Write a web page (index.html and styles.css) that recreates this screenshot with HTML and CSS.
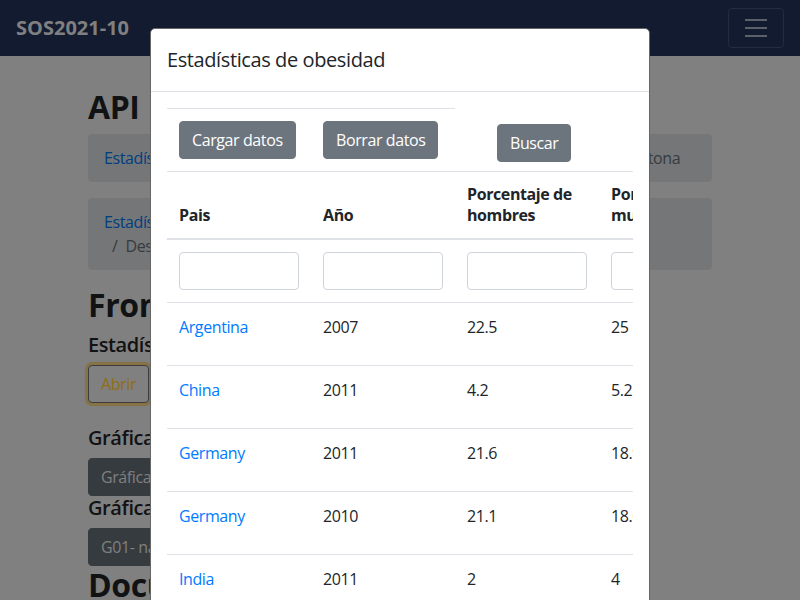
FILE: index.html
```html
<!DOCTYPE html>
<html lang="es">
<head>
<meta charset="utf-8">
<title>SOS2021-10</title>
<link rel="stylesheet" href="styles.css">
</head>
<body>
<div class="page">
  <nav class="navbar">
    <span class="brand">SOS2021-10</span>
    <button class="toggler" type="button" aria-label="Menú">
      <svg width="30" height="30" viewBox="0 0 30 30"><path d="M4 7h22M4 15h22M4 23h22" stroke="#5c606b" stroke-width="2" fill="none"/></svg>
    </button>
  </nav>

  <main class="container">
    <h1 class="h1">API</h1>
    <ol class="breadcrumb nowrap">
      <li><a href="#">Estadísticas de obesidad</a></li>
      <li class="sep">Documentación de la API realizada por Pedro Santona</li>
    </ol>
    <ol class="breadcrumb">
      <li><a href="#">Estadísticas de obesidad (API v2)</a></li>
      <li class="sep">Desarrollado por el grupo SOS2021-10 de la Universidad de Sevilla</li>
    </ol>

    <h1 class="h1">Front-end</h1>
    <h5 class="h5">Estadísticas de obesidad</h5>
    <button class="btn btn-warning-outline" type="button">Abrir</button>

    <h5 class="h5 spaced">Gráficas de obesidad</h5>
    <button class="btn btn-dim" type="button">Gráfica con Highcharts</button>
    <h5 class="h5">Gráficas de integración</h5>
    <button class="btn btn-dim" type="button">G01- natality-stats</button>
    <h1 class="h1">Documentación</h1>
  </main>
</div>

<div class="modal">
  <div class="modal-header">
    <h5 class="modal-title">Estadísticas de obesidad</h5>
  </div>
  <div class="modal-body">
    <div class="toolbar">
      <div class="actions">
        <div class="action-cell"><button class="btn btn-secondary" type="button">Cargar datos</button></div>
        <div class="action-cell"><button class="btn btn-secondary" type="button">Borrar datos</button></div>
      </div>
      <div class="search"><button class="btn btn-secondary" type="button">Buscar</button></div>
    </div>
    <div class="table-wrap">
      <table class="table">
        <thead>
          <tr>
            <th>Pais</th>
            <th>Año</th>
            <th>Porcentaje de hombres</th>
            <th>Porcentaje de mujeres</th>
            <th>Porcentaje total</th>
            <th>Acciones</th>
          </tr>
        </thead>
        <tbody>
          <tr>
            <td><input class="form-control" type="text"></td>
            <td><input class="form-control" type="text"></td>
            <td><input class="form-control" type="text"></td>
            <td><input class="form-control" type="text"></td>
            <td><input class="form-control" type="text"></td>
            <td></td>
          </tr>
          <tr>
            <td><a href="#">Argentina</a></td><td>2007</td><td>22.5</td><td>25</td><td>23.7</td>
            <td><button class="btn btn-danger" type="button">Borrar</button></td>
          </tr>
          <tr>
            <td><a href="#">China</a></td><td>2011</td><td>4.2</td><td>5.2</td><td>4.7</td>
            <td><button class="btn btn-danger" type="button">Borrar</button></td>
          </tr>
          <tr>
            <td><a href="#">Germany</a></td><td>2011</td><td>21.6</td><td>18.9</td><td>20.2</td>
            <td><button class="btn btn-danger" type="button">Borrar</button></td>
          </tr>
          <tr>
            <td><a href="#">Germany</a></td><td>2010</td><td>21.1</td><td>18.6</td><td>19.9</td>
            <td><button class="btn btn-danger" type="button">Borrar</button></td>
          </tr>
          <tr>
            <td><a href="#">India</a></td><td>2011</td><td>2</td><td>4</td><td>3</td>
            <td><button class="btn btn-danger" type="button">Borrar</button></td>
          </tr>
        </tbody>
      </table>
    </div>
  </div>
</div>
</body>
</html>
```

FILE: styles.css
```css
* { box-sizing: border-box; }

html, body { margin: 0; height: 100%; overflow: hidden; }

body {
  font-family: "Open Sans", "Noto Sans", sans-serif;
  font-size: 16px;
  line-height: 1.5;
  letter-spacing: -0.025em;
  color: #212529;
  background: #808080;
}

a { color: #007bff; text-decoration: none; }

/* page behind the open modal: colours as dimmed by the backdrop */
.page { color: #111213; }
.page a { color: #003e80; }

.navbar {
  display: flex;
  justify-content: space-between;
  align-items: center;
  padding: 8px 16px;
  background: #131b30;
}

.brand {
  font-size: 20px;
  font-weight: 700;
  line-height: 30px;
  padding: 5px 0;
  color: #808080;
  letter-spacing: 0;
}

.toggler {
  display: flex;
  padding: 4px 12px;
  background: transparent;
  border: 1px solid #252c3e;
  border-radius: 4px;
}

.container {
  width: 624px;
  margin: 0 auto;
  padding-top: 32px;
}

.h1 {
  font-size: 32px;
  font-weight: 700;
  line-height: 1.2;
  margin: 0 0 8px;
}

.h5 {
  font-size: 20px;
  font-weight: 600;
  line-height: 1.2;
  margin: 0 0 8px;
}

.h5.spaced { margin-top: 23px; }

.breadcrumb {
  display: flex;
  flex-wrap: wrap;
  list-style: none;
  margin: 0 0 16px;
  padding: 12px 16px;
  background: #757677;
  border-radius: 4px;
}

.breadcrumb.nowrap { flex-wrap: nowrap; white-space: nowrap; overflow: hidden; }

.breadcrumb .sep { padding-left: 8px; color: #363b3f; }
.breadcrumb .sep::before { content: "/"; padding-right: 8px; color: #363b3f; }

.btn {
  display: inline-block;
  font-family: inherit;
  font-size: 16px;
  line-height: 1.5;
  letter-spacing: inherit;
  padding: 6px 12px;
  border: 1px solid transparent;
  border-radius: 4px;
  color: #fff;
  white-space: nowrap;
}

.btn-secondary { background: #6c757d; border-color: #6c757d; }
.btn-danger { background: #dc3545; border-color: #dc3545; }

.btn-dim { background: #363b3f; border-color: #363b3f; color: #808080; }

.btn-warning-outline {
  background: transparent;
  color: #8f6e14;
  border-color: #3d3d3d;
  box-shadow: 0 0 0 3px #857245;
}

.modal {
  position: fixed;
  top: 28px;
  left: 50%;
  margin-left: -250px;
  width: 500px;
  background: #fff;
  border: 1px solid #666;
  border-radius: 5px;
  overflow: hidden;
}

.modal-header {
  padding: 16px;
  border-bottom: 1px solid #dee2e6;
}

.modal-title {
  margin: 0;
  font-size: 20px;
  font-weight: 500;
  line-height: 1.5;
}

.modal-body { padding: 16px; }

.toolbar { display: flex; align-items: flex-start; }

.actions {
  display: flex;
  width: 288px;
  border-top: 1px solid #dee2e6;
}

.action-cell { width: 144px; padding: 12px; }

.search { margin: 16px 0 0 42px; }

.table-wrap { overflow: hidden; }

.table {
  width: 864px;
  table-layout: fixed;
  border-collapse: collapse;
}

.table th,
.table td {
  padding: 12px;
  border-top: 1px solid #dee2e6;
  vertical-align: top;
  text-align: left;
  white-space: normal;
}

.table thead th {
  vertical-align: bottom;
  border-bottom: 2px solid #dee2e6;
  font-weight: 700;
  line-height: 21px;
}

.form-control {
  display: block;
  width: 100%;
  height: 38px;
  padding: 6px 12px;
  font: inherit;
  border: 1px solid #ced4da;
  border-radius: 4px;
  background: #fff;
}
```
